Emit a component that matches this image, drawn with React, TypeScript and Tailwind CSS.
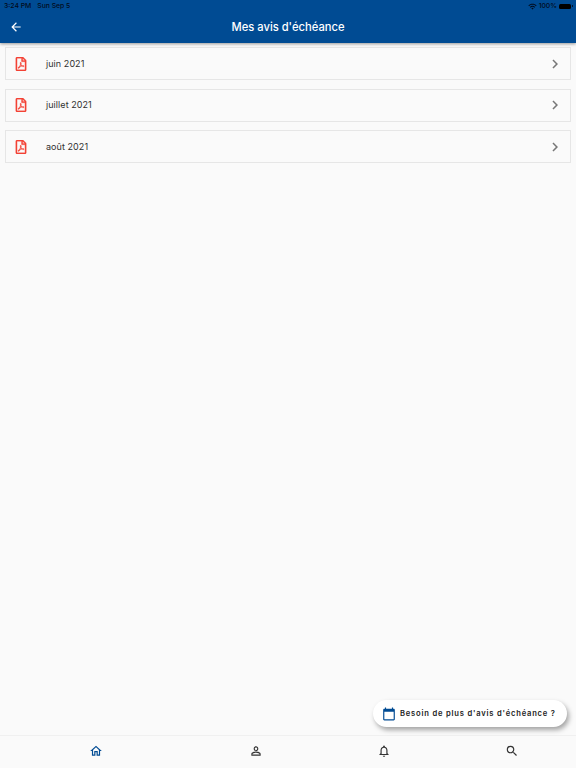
import type { ReactNode } from "react";
import { FaRegFilePdf } from "react-icons/fa";
import {
  MdArrowBack,
  MdCalendarToday,
  MdChevronRight,
  MdNotificationsNone,
  MdOutlineHome,
  MdPersonOutline,
  MdSearch,
  MdWifi,
} from "react-icons/md";

const notices = ["juin 2021", "juillet 2021", "août 2021"];

const StatusBar = () => (
  <div className="flex h-3 items-center justify-between pl-1 pr-[3px] text-[6.8px] font-medium leading-3 text-[#020c1c]">
    <div className="flex gap-[6px]">
      <span>3:24 PM</span>
      <span>Sun Sep 5</span>
    </div>
    <div className="flex items-center">
      <MdWifi className="mr-[2px] size-[9px]" />
      <span>100%</span>
      <span className="ml-[2px] h-[5px] w-3 rounded-[1.5px] bg-black" />
      <span className="ml-px h-[2px] w-px bg-[#06162d]" />
    </div>
  </div>
);

const Header = () => (
  <header className="relative h-[43px] shrink-0 bg-[#004b93] shadow-[0_1px_3px_rgba(0,0,0,0.4)]">
    <StatusBar />
    <div className="grid h-[31px] grid-cols-[32px_1fr_32px] items-center text-white">
      <button className="flex justify-center pb-px" aria-label="Retour">
        <MdArrowBack className="size-[14px]" />
      </button>
      <h1 className="text-center text-[11.2px] font-medium">Mes avis d'échéance</h1>
    </div>
  </header>
);

const NoticeRow = ({ label }: { label: string }) => (
  <button className="flex h-[33px] items-center border border-[#e6e6e6] pl-2 pr-[6px] text-left">
    <FaRegFilePdf className="size-[14px] stroke-[#f44336] stroke-[10] text-[#f44336]" />
    <span className="ml-[18px] flex-1 text-[9px] tracking-[0.06px] text-[#303030]">{label}</span>
    <MdChevronRight className="size-[18px] text-[#777777]" />
  </button>
);

const NavItem = ({ children, label }: { children: ReactNode; label: string }) => (
  <button className="flex w-32 items-center justify-center first:w-48 first:text-[#004b93]" aria-label={label}>
    {children}
  </button>
);

export default function App() {
  return (
    <div className="relative flex h-screen flex-col overflow-hidden bg-[#fafafa] font-['Inter',sans-serif] text-[#333333]">
      <Header />
      <main className="flex flex-1 flex-col gap-[8.5px] px-[5px] pt-1">
        {notices.map((label) => (
          <NoticeRow key={label} label={label} />
        ))}
      </main>

      <button className="absolute bottom-[41px] right-[9px] flex h-[27px] w-[194px] items-center rounded-full bg-white pl-[9px] shadow-[2px_3px_5px_rgba(0,0,0,0.35)]">
        <MdCalendarToday className="size-[14px] text-[#004b93]" />
        <span className="ml-1 whitespace-nowrap text-[7.6px] font-semibold tracking-[0.8px] text-[#222222]">
          Besoin de plus d'avis d'échéance ?
        </span>
      </button>

      <nav className="flex h-[33px] shrink-0 border-t border-[#f0f0f0] pb-[2px]">
        <NavItem label="Accueil">
          <MdOutlineHome className="size-[14px]" />
        </NavItem>
        <NavItem label="Profil">
          <MdPersonOutline className="size-[14px]" />
        </NavItem>
        <NavItem label="Notifications">
          <MdNotificationsNone className="size-[14px]" />
        </NavItem>
        <NavItem label="Recherche">
          <MdSearch className="size-[14px]" />
        </NavItem>
      </nav>
    </div>
  );
}
